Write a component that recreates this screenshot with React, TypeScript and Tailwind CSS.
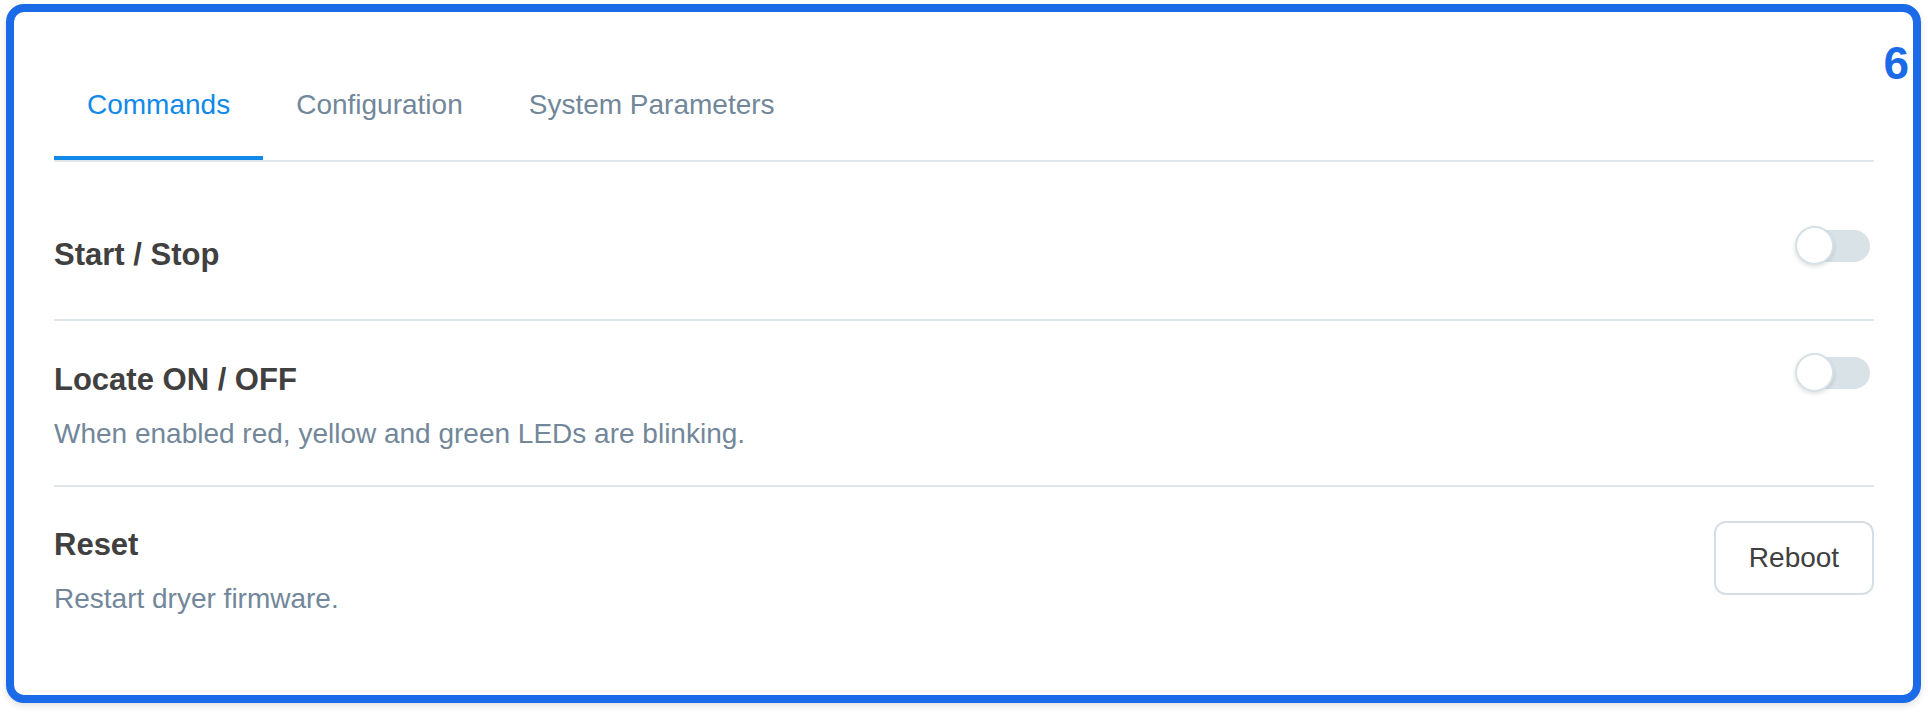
import React from "react";

function Toggle() {
  return (
    <div className="relative mr-[4px] h-[39px] w-[75px] shrink-0">
      <div className="absolute left-[3px] right-0 top-[4px] h-[32px] rounded-full bg-[#d9e2e7]" />
      <div className="absolute left-0 top-0 h-[39px] w-[39px] rounded-full border-2 border-[#d5e1e6] bg-white shadow-[0_2px_4px_rgba(0,0,0,0.12)]" />
    </div>
  );
}

export default function App() {
  const tabs = ["Commands", "Configuration", "System Parameters"];
  return (
    <div
      className="min-h-screen bg-white pb-[9px] pl-[6px] pr-[7px] pt-[4px]"
      style={{ fontFamily: '"Liberation Sans", Arial, Helvetica, sans-serif' }}
    >
      <div className="relative rounded-[18px] border-[8px] border-[#1b6ae8] bg-white pb-[76px] pl-[40px] pr-[39px] pt-[40px] shadow-[0_3px_6px_rgba(0,0,0,0.12)]">
        <span className="absolute right-[4px] top-[28px] text-[46px] font-bold leading-[46px] text-[#1b6ae8]">
          6
        </span>

        <div className="flex border-b-2 border-[#dfe6ea]">
          {tabs.map((t, i) => (
            <div
              key={t}
              className={
                i === 0
                  ? "border-b-4 border-[#1189e8] px-[33px] pb-[30px] pt-[32px] text-[28px] leading-[42px] text-[#1189e8]"
                  : "border-b-4 border-transparent px-[33px] pb-[30px] pt-[32px] text-[28px] leading-[42px] text-[#72879a]"
              }
            >
              {t}
            </div>
          ))}
        </div>

        <div className="flex items-start justify-between border-b-2 border-[#dfe6ea] pb-[44px] pt-[64px]">
          <div className="mt-[9px] text-[31px] font-bold leading-[40px] text-[#404040]">
            Start / Stop
          </div>
          <Toggle />
        </div>

        <div className="flex items-start justify-between border-b-2 border-[#dfe6ea] pb-[31px] pt-[32px]">
          <div className="mt-[7px]">
            <div className="text-[31px] font-bold leading-[40px] text-[#404040]">Locate ON / OFF</div>
            <div className="mt-[14px] text-[28px] leading-[40px] text-[#72879a]">
              When enabled red, yellow and green LEDs are blinking.
            </div>
          </div>
          <Toggle />
        </div>

        <div className="flex items-start justify-between pt-[34px]">
          <div className="mt-[4px]">
            <div className="text-[31px] font-bold leading-[40px] text-[#404040]">Reset</div>
            <div className="mt-[14px] text-[28px] leading-[40px] text-[#72879a]">
              Restart dryer firmware.
            </div>
          </div>
          <button className="flex h-[74px] w-[160px] items-center justify-center rounded-[12px] border-2 border-[#d5dee4] bg-white text-[28px] text-[#404040]">
            Reboot
          </button>
        </div>
      </div>
    </div>
  );
}
